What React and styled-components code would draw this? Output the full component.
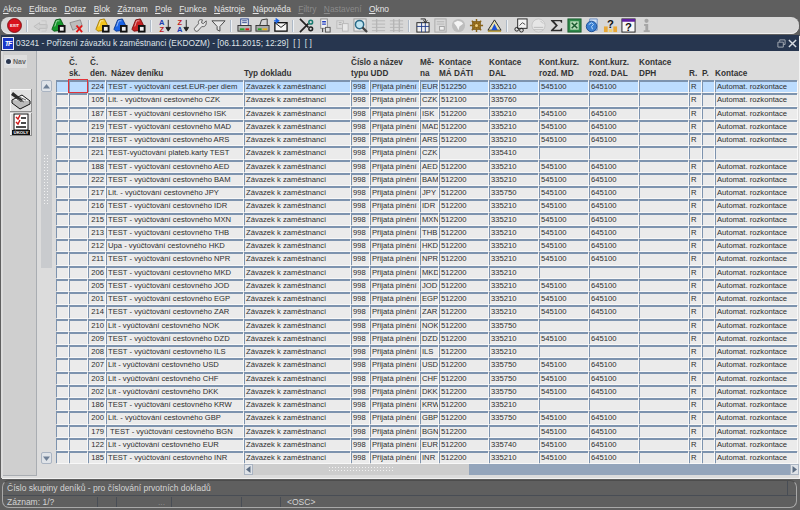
import React from "react";
import styled, { createGlobalStyle } from "styled-components";

const MENU = [
  ["A", "kce"], ["E", "ditace"], ["D", "otaz"], ["B", "lok"], ["Z", "áznam"], ["P", "ole"],
  ["F", "unkce"], ["N", "ástroje"], ["N", "ápověda"], ["F", "iltry", true], ["N", "astavení", true], ["O", "kno"],
];

const COLS = "13px 19px 18px 138px 107px 19px 50px 19px 50px 50px 50px 50px 50px 13px 13px 83px";

const HEAD = [
  ["", "", 0], ["Č.", "sk.", 0], ["Č.", "den.", 2], ["", "Název deníku", 5], ["", "Typ dokladu", 0],
  ["Číslo a název", "typu UDD", 0], ["", "", 0], ["Mě-", "na", 0], ["Kontace", "MÁ DÁTI", 0], ["Kontace", "DAL", 0],
  ["Kont.kurz.", "rozd. MD", 0], ["Kont.kurz.", "rozd. DAL", 0], ["Kontace", "DPH", 0],
  ["", "R.", 0], ["", "P.", 0], ["", "Kontace", 0],
];

const T = "TEST - vyúčtování cestovného ";
const L = "Lit - vyúčtování cestovného ";
const LD = "Lit. - vyúčtování cestovného ";

const ROWS = [
  [224, "TEST - vyúčtování cest.EUR-per diem", "EUR", "512250", "335210", 1],
  [105, LD + "CZK", "CZK", "512100", "335760", 0],
  [187, T + "ISK", "ISK", "512200", "335210", 1],
  [219, T + "MAD", "MAD", "512200", "335210", 1],
  [218, T + "ARS", "ARS", "512200", "335210", 1],
  [221, "TEST-vyúčtování plateb.karty TEST", "CZK", "", "335410", 0, true],
  [188, T + "AED", "AED", "512200", "335210", 1],
  [222, T + "BAM", "BAM", "512200", "335210", 1],
  [217, LD + "JPY", "JPY", "512200", "335750", 1],
  [216, T + "IDR", "IDR", "512200", "335210", 1],
  [215, T + "MXN", "MXN", "512200", "335210", 1],
  [213, T + "THB", "THB", "512200", "335210", 1],
  [212, "Upa - vyúčtování cestovného HKD", "HKD", "512200", "335210", 1],
  [211, T + "NPR", "NPR", "512200", "335210", 1],
  [206, T + "MKD", "MKD", "512200", "335210", 0],
  [205, T + "JOD", "JOD", "512200", "335210", 1],
  [201, T + "EGP", "EGP", "512200", "335210", 1],
  [214, T + "ZAR", "ZAR", "512200", "335210", 1],
  [210, L + "NOK", "NOK", "512200", "335750", 0],
  [209, T + "DZD", "DZD", "512200", "335210", 1],
  [208, T + "ILS", "ILS", "512200", "335210", 0],
  [207, L + "USD", "USD", "512200", "335750", 1],
  [203, L + "CHF", "CHF", "512200", "335750", 1],
  [202, L + "DKK", "DKK", "512200", "335750", 1],
  [186, T + "KRW", "KRW", "512200", "335210", 0],
  [200, LD + "GBP", "GBP", "512200", "335750", 1],
  [179, "\u00a0" + T + "BGN", "BGN", "512200", "", 1],
  [122, L + "EUR", "EUR", "512200", "335740", 1],
  [185, T + "INR", "INR", "512200", "335210", 1],
];

const Tag = ({ color, shade }) => (
  <Ico viewBox="0 0 16 16">
    <path d="M1 12 L5 2 L10 1 L13 7 L13 13 L3 14 Z" fill={color} stroke={shade} />
    <path d="M4 9 L6 3 L9 3" fill="none" stroke="#fff" strokeOpacity=".6" />
    <rect x="7.5" y="7.5" width="8" height="8" fill="#111" />
    <rect x="9.5" y="9.5" width="4" height="4" fill="#eee" />
  </Ico>
);

const Sort = ({ top, bottom, topColor, bottomColor }) => (
  <Ico viewBox="0 0 16 16">
    <SvgLetter x="5" y="7.5" fill={topColor}>{top}</SvgLetter>
    <SvgLetter x="5" y="15" fill={bottomColor}>{bottom}</SvgLetter>
    <path d="M12 2 V12 M9.5 10 L12 14 L14.5 10 Z" stroke="#222" fill="#222" />
  </Ico>
);

const Bars = ({ split }) => (
  <Ico viewBox="0 0 16 16">
    <path d={split ? "M5 1 V15 M11 1 V15" : "M6 1 V15"} stroke="#b5b5b5" strokeWidth="1.5" />
    <path d="M1 3 H15 M1 6.5 H15 M1 10 H15 M1 13.5 H15" stroke="#b5b5b5" />
  </Ico>
);

const getIcons = () => [
  <Ico viewBox="0 0 16 16">
    <circle cx="8" cy="8" r="7.4" fill="#d8121c" stroke="#7c1418" />
    <text x="8" y="9.6" fontSize="4.4" fontWeight="700" fill="#fff" textAnchor="middle" fontFamily="Liberation Sans">EXIT</text>
  </Ico>,
  "|",
  <Ico viewBox="0 0 16 16">
    <path d="M1 9 L7 5 V7 H15 V11 H7 V13 Z" fill="#d0d0d0" stroke="#bcbcbc" />
    <path d="M9 3 H14 V14 H9" fill="none" stroke="#c6c6c6" />
  </Ico>,
  <Tag color="#16982c" shade="#0b5a18" />,
  <Ico viewBox="0 0 16 16">
    <path d="M1 5 L12 2 L14 8 L4 13 Z" fill="#bdbdbd" stroke="#8c8c8c" />
    <path d="M8 8 L14 15 M14 8 L8 15" stroke="#e01818" strokeWidth="2" />
  </Ico>,
  "|",
  <Tag color="#f2c41e" shade="#a87e08" />,
  <Tag color="#1a64e6" shade="#0c3a90" />,
  <Tag color="#c92222" shade="#7a1010" />,
  "|",
  <Sort top="A" bottom="Z" topColor="#1a3ab0" bottomColor="#c01c1c" />,
  <Sort top="Z" bottom="A" topColor="#c01c1c" bottomColor="#1a3ab0" />,
  <Ico viewBox="0 0 16 16">
    <path d="M14 3 L11 6 L9 5 L10 2 C7 1 5 3 6 6 L1.5 11 C1 13 3 15 5 14 L9.5 9 C12 10 15 8 14 3 Z" fill="#e4e4e4" stroke="#555" />
  </Ico>,
  <Ico viewBox="0 0 16 16">
    <path d="M1 3 H15 L9.5 9 V14 L6.5 12.5 V9 Z" fill="#e6e6e6" stroke="#444" />
  </Ico>,
  "|",
  <Ico viewBox="0 0 16 16">
    <rect x="4" y="1" width="8" height="7" fill="#f4f4f4" stroke="#24408c" />
    <path d="M5.5 3 H10.5 M5.5 5 H10.5" stroke="#24408c" />
    <rect x="1" y="8" width="14" height="6" fill="#b8b8b8" stroke="#333" />
    <path d="M3 12 H8" stroke="#2aa02a" strokeWidth="2" />
    <path d="M9 12 H13" stroke="#d02020" strokeWidth="2" />
  </Ico>,
  <Ico viewBox="0 0 16 16">
    <path d="M5 8 L7 2 L13 1 L13 8 Z" fill="#d4d4d4" stroke="#333" />
    <rect x="1" y="8" width="14" height="6" fill="#aaa" stroke="#333" />
    <path d="M3 12 H7" stroke="#2aa02a" strokeWidth="2" />
    <path d="M8 12 H13" stroke="#e0b020" strokeWidth="2" />
  </Ico>,
  <Ico viewBox="0 0 16 16">
    <rect x="2" y="5" width="13" height="9" fill="#f6f6f6" stroke="#111" strokeWidth="1.4" />
    <path d="M2 5 L8.5 10 L15 5" fill="none" stroke="#111" />
    <path d="M1 3 H5 M3.5 1 L6 3 L3.5 5 Z" stroke="#1a64e6" fill="#1a64e6" strokeWidth="1.4" />
  </Ico>,
  "|",
  <Ico viewBox="0 0 16 16">
    <path d="M1 1 L10 10 M1 15 L10 6" stroke="#222" strokeWidth="1.8" />
    <circle cx="12.5" cy="4.5" r="2" fill="none" stroke="#1a7a70" strokeWidth="1.6" />
    <circle cx="12.5" cy="11.5" r="2" fill="none" stroke="#222" strokeWidth="1.6" />
  </Ico>,
  <Ico viewBox="0 0 16 16">
    <rect x="4" y="1" width="7" height="10" fill="#f2f2f2" stroke="#888" />
    <path d="M5.5 4 H9.5 M5.5 6.5 H9.5" stroke="#2440c0" strokeWidth="1.4" />
    <rect x="9" y="10" width="5" height="5" fill="#ddd" stroke="#555" />
    <path d="M6 11 V15" stroke="#333" />
  </Ico>,
  <Ico viewBox="0 0 16 16">
    <rect x="2" y="3" width="7" height="8" fill="#dcdcdc" stroke="#bbb" />
    <rect x="8" y="6" width="6" height="8" fill="#e8e8e8" stroke="#b8b8b8" />
    <path d="M4 5 H7 M4 7 H7" stroke="#aaa" />
  </Ico>,
  <Ico viewBox="0 0 16 16">
    <rect x="1" y="1" width="13" height="13" fill="#e8e8e8" stroke="#9a9a9a" />
    <circle cx="7" cy="7" r="4.4" fill="#bfe4f0" stroke="#2a6a88" strokeWidth="1.6" />
    <path d="M10 10 L15 15" stroke="#444" strokeWidth="2.4" />
  </Ico>,
  <Bars />,
  <Bars split />,
  "|",
  <Ico viewBox="0 0 16 16">
    <rect x="2" y="5" width="13" height="10" fill="#f0f0f0" stroke="#222" />
    <path d="M2 9 H15 M7 5 V15 M11 5 V15" stroke="#24408c" />
    <path d="M6 1 H11 V4 M9 2.5 L11 5 L13 2.5" fill="none" stroke="#222" />
  </Ico>,
  <Ico viewBox="0 0 16 16">
    <rect x="2" y="1" width="12" height="14" fill="#d8d8d8" stroke="#a8a8a8" />
    <rect x="7" y="9" width="5" height="4" fill="#f0f0f0" stroke="#a0a0a0" />
    <path d="M4 4 H12 M4 6.5 H12" stroke="#b4b4b4" />
  </Ico>,
  <Ico viewBox="0 0 16 16">
    <circle cx="8" cy="8" r="7" fill="#bdbdbd" />
    <path d="M3 5 L7 3 L11 4 L13 6 L9 9 L8 13 L6 9 Z" fill="#f4f4f4" />
  </Ico>,
  <Ico viewBox="0 0 16 16">
    <rect x="4" y="4" width="8" height="8" fill="#b5892c" stroke="#6e4f10" />
    <path d="M8 1 V15 M1 8 H15 M3 3 L13 13 M13 3 L3 13" stroke="#8a6418" strokeWidth="1.5" />
    <circle cx="8" cy="8" r="1.6" fill="#f0d080" />
  </Ico>,
  <Ico viewBox="0 0 16 16">
    <path d="M8 2 L15 13 H1 Z" fill="#e8e0b0" stroke="#222" />
    <path d="M8 6 L11.5 13 H4.5 Z" fill="#1a50d8" />
    <path d="M1 14 H15" stroke="#b09020" strokeWidth="1.4" />
  </Ico>,
  "|",
  <Ico viewBox="0 0 16 16">
    <rect x="5" y="1" width="10" height="10" fill="#f2f2f2" stroke="#222" />
    <path d="M7 8 L10 5 L13 7" fill="none" stroke="#444" />
    <circle cx="4" cy="12" r="2" fill="none" stroke="#222" />
    <circle cx="9" cy="13" r="2" fill="none" stroke="#222" />
  </Ico>,
  <Ico viewBox="0 0 16 16">
    <circle cx="8" cy="8" r="7" fill="#e6e6e6" stroke="#c4c4c4" />
    <path d="M3 10 H13 M3 12.5 H13 M10 3 L13 6" stroke="#bbb" />
  </Ico>,
  <Ico viewBox="0 0 16 16">
    <path d="M2 2 H14 V5 H13 L12 3.5 H5.5 L9.5 8 L5 12.5 H12 L13 11 H14 V14 H2 V13 L7 8 L2 3 Z" fill="#2c2c2c" />
  </Ico>,
  <Ico viewBox="0 0 16 16">
    <rect x="1" y="1" width="14" height="14" fill="#2f8a4a" stroke="#1c5a30" />
    <rect x="3.5" y="3.5" width="9" height="9" fill="#b8dcb8" />
    <path d="M5 5 L11 11 M11 5 L5 11" stroke="#1c5a30" strokeWidth="1.6" />
  </Ico>,
  <Ico viewBox="0 0 16 16">
    <path d="M5 1 H13 V13 H5 Z" fill="#cfe0f4" stroke="#6a8cc0" />
    <circle cx="7" cy="9" r="5.6" fill="#3a7ed0" stroke="#1c4e94" />
    <path d="M4 7 L7 5 L9 7 L7 9 L8 12" fill="none" stroke="#bfe0ff" />
  </Ico>,
  <Ico viewBox="0 0 16 16">
    <rect x="1" y="9" width="4" height="6" fill="#e8a838" />
    <rect x="11" y="9" width="4" height="6" fill="#e8a838" />
    <SvgMark x="8" y="10.5" fontSize="12" fill="#111">?</SvgMark>
    <rect x="6" y="12" width="4" height="3" fill="#f0d070" />
  </Ico>,
  <Ico viewBox="0 0 16 16">
    <rect x="1" y="1" width="14" height="14" fill="#f8f8f8" stroke="#222" />
    <rect x="1" y="1" width="14" height="3" fill="#6020a0" />
    <SvgMark x="8" y="14" fontSize="12" fill="#111">?</SvgMark>
  </Ico>,
  <Ico viewBox="0 0 16 16">
    <circle cx="8" cy="3" r="2.2" fill="#a6a6a6" />
    <path d="M5.5 6.5 H9.8 V13 H11.5 V15 H5 V13 H6.8 V8.5 H5.5 Z" fill="#a6a6a6" />
  </Ico>,
];

const NavPencil = () => (
  <svg viewBox="0 0 22 22" width="22" height="22">
    <path d="M2 10 L10 16 L20 11 L12 5 Z" fill="#f4f4f4" stroke="#111" />
    <path d="M2 10 V13 L10 19 L20 14 V11" fill="#bbb" stroke="#111" />
    <path d="M3 2 L13 10 L11 12 L1 5 Z" fill="#2a2a2a" />
    <path d="M7 9 L14 12 M9 7 L16 10" stroke="#666" />
  </svg>
);

const NavTasks = () => (
  <svg viewBox="0 0 22 23" width="22" height="23">
    <rect x="4" y="1" width="14" height="16" fill="#fff" stroke="#111" />
    <path d="M6 4 L8 6 L10 2 M6 9 L8 11 L10 7" fill="none" stroke="#d01818" strokeWidth="1.4" />
    <path d="M11 5 H16 M11 10 H16 M6 14 H16" stroke="#111" strokeWidth="1.4" />
    <rect x="2" y="17" width="18" height="5" fill="#111" />
    <text x="11" y="21.2" fontSize="4.4" fontWeight="700" fill="#fff" textAnchor="middle" fontFamily="Liberation Sans">ÚKOLY</text>
  </svg>
);

const App = () => {
  return (
    <Page>
      <GlobalStyle />
      <MenuBar>
        {MENU.map(([first, rest, off], i) => (
          <MenuItem key={i} $off={off}>
            <u>{first}</u>
            {rest}
          </MenuItem>
        ))}
      </MenuBar>
      <Toolbar>
        {getIcons().map((icon, i) =>
          icon === "|" ? <ToolSep key={i} /> : <ToolButton key={i}>{icon}</ToolButton>
        )}
      </Toolbar>
      <Window>
        <TitleBar>
          <TitleLogo>TF</TitleLogo>
          <TitleText>03241 - Pořízení závazku k zaměstnanci (EKDOZM) - [06.11.2015; 12:29]&nbsp; [ ]&nbsp; [ ]</TitleText>
          <WindowButtons>
            <svg width="9" height="9" viewBox="0 0 10 10">
              <path d="M3 3 V1 H9 V6 H7 M1 3.5 H7 V9 H1 Z" fill="none" stroke="#aab0b8" />
            </svg>
            <svg width="9" height="9" viewBox="0 0 10 10">
              <path d="M1 1 L9 9 M9 1 L1 9" stroke="#d8dce2" strokeWidth="1.6" />
            </svg>
          </WindowButtons>
        </TitleBar>
        <Body>
          <NavPanel>
            <NavTab>
              <NavDot />
              Nav
            </NavTab>
            <NavButtons>
              <NavButton>
                <NavPencil />
              </NavButton>
              <NavButton>
                <NavTasks />
              </NavButton>
            </NavButtons>
          </NavPanel>
          <Main>
            <HeadRow>
              {HEAD.map(([top, bottom, pad], i) => (
                <HeadCell key={i} $pad={pad}>
                  <span>{top}</span>
                  <span>{bottom}</span>
                </HeadCell>
              ))}
            </HeadRow>
            <TableArea>
              <VScroll>
                <ScrollButton>
                  <svg width="7" height="5" viewBox="0 0 7 5">
                    <path d="M0 4.5 L3.5 0 L7 4.5 Z" fill="#6f8096" />
                  </svg>
                </ScrollButton>
                <VTrack>
                  <VThumb>
                    <VGrip />
                  </VThumb>
                </VTrack>
                <ScrollButton>
                  <svg width="7" height="5" viewBox="0 0 7 5">
                    <path d="M0 0.5 L3.5 5 L7 0.5 Z" fill="#6f8096" />
                  </svg>
                </ScrollButton>
              </VScroll>
              <Rows>
                {ROWS.map(([den, name, cur, md, dal, kurz, blank], i) => {
                  const sel = i === 0;
                  return (
                    <React.Fragment key={den}>
                      <Cell $sel={sel} />
                      <Cell $sel={sel} $focus={sel} />
                      <Cell $sel={sel} $right>{den}</Cell>
                      <Cell $sel={sel}>{name}</Cell>
                      <Cell $sel={sel}>Závazek k zaměstnanci</Cell>
                      <Cell $sel={sel}>998</Cell>
                      <Cell $sel={sel}>Přijatá plnění z</Cell>
                      <Cell $sel={sel}>{cur}</Cell>
                      <Cell $sel={sel}>{md}</Cell>
                      <Cell $sel={sel}>{dal}</Cell>
                      <Cell $sel={sel}>{kurz ? "545100" : ""}</Cell>
                      <Cell $sel={sel}>{kurz ? "645100" : ""}</Cell>
                      <Cell $sel={sel} />
                      <Cell $sel={sel}>{blank ? "" : "R"}</Cell>
                      <Cell $sel={sel} />
                      <Cell $sel={sel}>{blank ? "" : "Automat. rozkontace"}</Cell>
                    </React.Fragment>
                  );
                })}
              </Rows>
            </TableArea>
            <HScroll>
              <HArrow>
                <svg width="5" height="7" viewBox="0 0 5 7">
                  <path d="M4.5 0 L0 3.5 L4.5 7 Z" fill="#5d6e84" />
                </svg>
              </HArrow>
              <HThumb>
                <HGrip />
              </HThumb>
              <HTrack />
              <HArrow>
                <svg width="5" height="7" viewBox="0 0 5 7">
                  <path d="M0.5 0 L5 3.5 L0.5 7 Z" fill="#5d6e84" />
                </svg>
              </HArrow>
            </HScroll>
          </Main>
        </Body>
      </Window>
      <StatusBox>
        <HintRow>
          <HintText>Číslo skupiny deníků - pro číslování prvotních dokladů</HintText>
          <HintEnd />
        </HintRow>
        <StatusRow>
          <StatusCell $w={91}>Záznam: 1/?</StatusCell>
          <StatusCell $w={19} />
          <StatusCell $w={55} $dim $right>...</StatusCell>
          <StatusCell $w={70} />
          <StatusCell $w={39} />
          <StatusCell $w={120} $last>&lt;OSC&gt;</StatusCell>
        </StatusRow>
      </StatusBox>
    </Page>
  );
};

export default App;

const GlobalStyle = createGlobalStyle`
  html, body {
    margin: 0;
    padding: 0;
    background: #5f5f5f;
  }
`;

const Page = styled.div`
  width: 800px;
  height: 510px;
  display: flex;
  flex-direction: column;
  overflow: hidden;
  font-family: "Liberation Sans", Arial, sans-serif;
  background: #5f5f5f;
`;

const MenuBar = styled.div`
  height: 17px;
  flex: none;
  display: flex;
  align-items: center;
  gap: 7.4px;
  padding-left: 3px;
  font-size: 8.4px;
`;

const MenuItem = styled.span`
  color: ${(p) => (p.$off ? "#8b8b8b" : "#e6e6e6")};
`;

const Toolbar = styled.div`
  height: 17px;
  flex: none;
  margin: 0 1px 0 1px;
  padding-left: 4px;
  display: flex;
  align-items: center;
  background: #d7d7d7;
  border-radius: 8px;
  box-shadow: inset 0 -1px 0 #efefef;
`;

const ToolButton = styled.div`
  width: 18px;
  height: 16px;
  flex: none;
  display: flex;
  align-items: center;
  justify-content: center;
`;

const ToolSep = styled.div`
  width: 2px;
  height: 12px;
  margin: 0 3px;
  flex: none;
  background: #eef2f6;
  border-left: 1px solid #aeb9c6;
  box-sizing: border-box;
`;

const Ico = styled.svg`
  width: 15px;
  height: 15px;
`;

const SvgLetter = styled.text`
  font-family: "Liberation Sans", sans-serif;
  font-size: 8px;
  font-weight: 700;
  text-anchor: middle;
`;

const SvgMark = styled.text`
  font-family: "Liberation Sans", sans-serif;
  font-weight: 700;
  text-anchor: middle;
`;

const Window = styled.div`
  flex: 0 0 443px;
  margin: 1px 1px 0 1px;
  display: flex;
  flex-direction: column;
  background: #dcdcdc;
  box-shadow: 1px 1px 0 #f2f2f2;
`;

const TitleBar = styled.div`
  height: 16px;
  flex: none;
  display: flex;
  align-items: center;
  background: #27364f;
  padding: 0 2px 0 1px;
`;

const TitleLogo = styled.div`
  width: 12px;
  height: 13px;
  margin-right: 2px;
  display: flex;
  align-items: center;
  justify-content: center;
  background: #1836c8;
  border: 1px solid #e8e8f4;
  box-sizing: border-box;
  color: #fff;
  font-size: 7px;
  font-weight: 700;
  font-style: italic;
  letter-spacing: -1px;
  line-height: 1;
`;

const TitleText = styled.span`
  flex: 1;
  color: #dfe3e8;
  font-size: 8.35px;
  white-space: nowrap;
`;

const WindowButtons = styled.div`
  display: flex;
  gap: 2px;
  align-items: center;
`;

const Body = styled.div`
  flex: 1;
  display: flex;
  min-height: 0;
`;

const NavPanel = styled.div`
  width: 34px;
  margin-left: 2px;
  margin-bottom: 2px;
  flex: none;
  box-sizing: border-box;
  padding: 4px 0 0 1px;
  background: #cfcfcf;
  border-right: 1px solid #a9adb2;
  border-bottom: 1px solid #a9adb2;
`;

const NavTab = styled.div`
  width: 23px;
  height: 13px;
  display: flex;
  align-items: center;
  gap: 2px;
  font-size: 7px;
  font-weight: 700;
  color: #666;
  background: #dedede;
`;

const NavDot = styled.span`
  width: 5px;
  height: 5px;
  margin-left: 2px;
  border-radius: 50%;
  background: #2c3850;
  box-shadow: 0 0 0 1px #e8ecf2;
`;

const NavButtons = styled.div`
  margin: 21px 0 0 6px;
  display: flex;
  flex-direction: column;
  gap: 1px;
`;

const NavButton = styled.div`
  width: 22px;
  height: 23px;
  display: flex;
  align-items: center;
  justify-content: center;
  background: #e0e0e0;
  box-shadow: inset -1px -1px 0 #8e8e8e, inset 1px 1px 0 #f6f6f6;
`;

const Main = styled.div`
  flex: 1;
  min-width: 0;
  display: flex;
  flex-direction: column;
`;

const HeadRow = styled.div`
  height: 29px;
  flex: none;
  display: grid;
  grid-template-columns: ${COLS};
  margin-left: 19px;
`;

const HeadCell = styled.div`
  display: flex;
  flex-direction: column;
  justify-content: flex-end;
  padding-left: ${(p) => p.$pad}px;
  padding-bottom: 1px;
  font-size: 8.2px;
  font-weight: 700;
  line-height: 11px;
  color: #333;
  white-space: nowrap;

  span {
    height: 11px;
  }
`;

const TableArea = styled.div`
  flex: none;
  display: flex;
`;

const VScroll = styled.div`
  width: 19px;
  flex: none;
  display: flex;
  flex-direction: column;
  align-items: flex-start;
  padding-left: 4px;
  box-sizing: border-box;
`;

const ScrollButton = styled.div`
  width: 11px;
  height: 12px;
  flex: none;
  display: flex;
  align-items: center;
  justify-content: center;
  background: #dfe3e8;
  border: 1px solid #aab4c2;
  border-radius: 2px;
  box-sizing: border-box;
`;

const VTrack = styled.div`
  flex: 1;
  width: 11px;
  display: flex;
  flex-direction: column;
`;

const VThumb = styled.div`
  height: 176px;
  display: flex;
  align-items: center;
  justify-content: center;
  background: #c9cbce;
`;

const VGrip = styled.div`
  width: 7px;
  height: 52px;
  background-image: radial-gradient(#f2f2f2 0.8px, transparent 1px);
  background-size: 3px 3px;
`;

const Rows = styled.div`
  display: grid;
  grid-template-columns: ${COLS};
  grid-auto-rows: 13.25px;
`;

const Cell = styled.div`
  position: relative;
  margin: 0 1px 1px 0;
  padding: 0 ${(p) => (p.$right ? "1px" : 0)} 0 1px;
  overflow: hidden;
  white-space: nowrap;
  font-size: 7.65px;
  line-height: 10px;
  color: #2e2e2e;
  text-align: ${(p) => (p.$right ? "right" : "left")};
  background: ${(p) => (p.$sel ? "#bcdcfe" : "#ebebeb")};
  border-top: 2px solid #7d93ae;
  border-left: 1px solid #7d93ae;
  box-shadow: 1px 1px 0 #f8f8f8;
  outline: ${(p) => (p.$focus ? "1px solid #e2343a" : "none")};
  outline-offset: 0;
  z-index: ${(p) => (p.$focus ? 1 : 0)};
  box-sizing: border-box;
`;

const HScroll = styled.div`
  height: 11px;
  flex: none;
  margin-left: 207px;
  display: flex;
`;

const HArrow = styled.div`
  width: 9px;
  flex: none;
  display: flex;
  align-items: center;
  justify-content: center;
  background: #dfe3e8;
  border: 1px solid #aab4c2;
  box-sizing: border-box;
`;

const HThumb = styled.div`
  width: 216px;
  flex: none;
  display: flex;
  align-items: center;
  justify-content: center;
  background: #cdcdcd;
`;

const HGrip = styled.div`
  width: 66px;
  height: 7px;
  background-image: radial-gradient(#f2f2f2 0.8px, transparent 1px);
  background-size: 3px 3px;
`;

const HTrack = styled.div`
  flex: 1;
  background: #94a5bb;
`;

const StatusBox = styled.div`
  flex: 1;
  margin: 2px 3px 2px 2px;
  display: flex;
  flex-direction: column;
  border: 1px solid #a8a8a8;
  border-top-color: #4c4c4c;
  border-radius: 7px;
  box-sizing: border-box;
  color: #d4d4d4;
  font-size: 8.5px;
`;

const HintRow = styled.div`
  height: 14px;
  padding: 0 8px 0 4px;
  display: flex;
  align-items: center;
  border-bottom: 1px solid #484d55;
`;

const HintText = styled.span`
  flex: 1;
`;

const HintEnd = styled.span`
  width: 1px;
  height: 100%;
  background: #484d55;
`;

const StatusRow = styled.div`
  flex: 1;
  display: flex;
  align-items: center;
  padding-left: 4px;
`;

const StatusCell = styled.div`
  width: ${(p) => p.$w}px;
  height: 10px;
  line-height: 10px;
  padding: 0 ${(p) => (p.$right ? "6px" : 0)} 0 ${(p) => (p.$last ? "6px" : 0)};
  flex: none;
  box-sizing: border-box;
  text-align: ${(p) => (p.$right ? "right" : "left")};
  color: ${(p) => (p.$dim ? "#8c8c8c" : "inherit")};
  border-right: ${(p) => (p.$last ? "none" : "1px solid #484d55")};
`;
